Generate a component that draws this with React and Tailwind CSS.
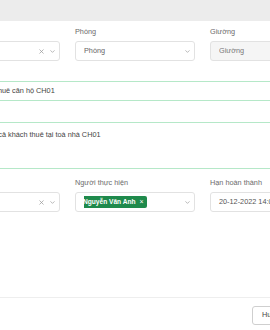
import { ChevronDown, X } from "lucide-react";

function Label({ children }) {
  return <div className="mb-[4px] h-[10px] text-[7.3px] leading-[10px] text-[#6b6b6b]">{children}</div>;
}

function SelectBox({ children, clear = false, disabled = false }) {
  return (
    <div
      className={`flex h-[20px] items-center rounded-[3px] border border-[#e2e2e2] pl-[8px] pr-[3px] text-[7.3px] text-[#555] ${
        disabled ? "bg-[#f5f5f5]" : "bg-white"
      }`}
    >
      <div className="flex flex-1 items-center overflow-hidden whitespace-nowrap">{children}</div>
      {clear && <X className="mr-[4px] h-[7px] w-[7px] text-[#999]" strokeWidth={2.5} />}
      {!disabled && <ChevronDown className="h-[7px] w-[7px] text-[#888]" strokeWidth={2} />}
    </div>
  );
}

export default function App() {
  return (
    <div className="relative h-[330px] w-[270px] overflow-hidden bg-white font-['Liberation_Sans',Arial,sans-serif]">
      <div className="h-[21px] bg-[#ececec]" />

      <div className="ml-[-60px] w-[420px] pt-[6px]">
        <div className="grid grid-cols-[120px_120px_120px] gap-x-[15px]">
          <div>
            <Label>Toà nhà</Label>
            <SelectBox clear>CH01</SelectBox>
          </div>
          <div>
            <Label>Phòng</Label>
            <SelectBox>
              <span className="text-[#666]">Phòng</span>
            </SelectBox>
          </div>
          <div>
            <Label>Giường</Label>
            <SelectBox disabled>
              <span className="text-[#777]">Giường</span>
            </SelectBox>
          </div>
        </div>

        <div className="ml-[-15px] mt-[20px] flex h-[20px] items-center whitespace-nowrap border-y border-[#b5e8c8] pl-[8px] text-[7.3px] text-[#444]">
          Thông báo thu tiền thuê căn hộ CH01
        </div>

        <div className="ml-[-19px] mt-[21px] h-[47px] whitespace-nowrap border-y border-[#b5e8c8] pl-[8px] pt-[7px] text-[7.3px] text-[#444]">
          Gửi thông báo tới tất cả khách thuê tại toà nhà CH01
        </div>

        <div className="mt-[9px] grid grid-cols-[120px_120px_120px] gap-x-[15px]">
          <div>
            <Label>Loại</Label>
            <SelectBox clear>Thông báo</SelectBox>
          </div>
          <div>
            <Label>Người thực hiện</Label>
            <SelectBox>
              <span className="ml-[-4px] flex h-[12px] items-center gap-[4px] rounded-[2px] bg-[#1f8a4c] px-[3px] text-[6.6px] font-bold text-white">
                Nguyễn Văn Anh
                <span className="text-[7px] font-normal text-white">×</span>
              </span>
            </SelectBox>
          </div>
          <div>
            <Label>Hạn hoàn thành</Label>
            <div className="flex h-[20px] items-center whitespace-nowrap rounded-[3px] border border-[#e2e2e2] pl-[8px] text-[7.3px] text-[#555]">
              20-12-2022 14:00
            </div>
          </div>
        </div>
      </div>

      <div className="absolute left-0 right-0 top-[297px] border-t border-[#eeeeee] pt-[8px]">
        <div className="ml-[252px] flex h-[19px] w-[50px] items-center rounded-[3px] border border-[#cfcfcf] pl-[9px] text-[7.3px] text-[#444]">
          Huỷ
        </div>
      </div>
    </div>
  );
}
